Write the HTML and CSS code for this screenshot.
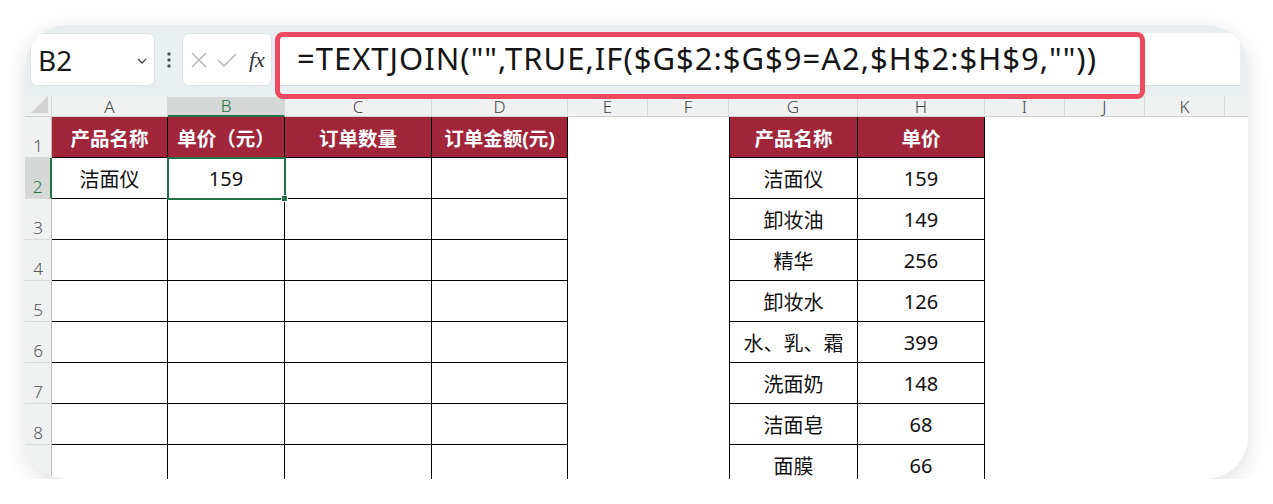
FILE: index.html
```html
<!DOCTYPE html>
<html lang="zh-CN">

<head>
    <meta charset="UTF-8">
    <meta name="viewport" content="width=device-width, initial-scale=1.0">
    <title>TEXTJOIN</title>
    <link rel="stylesheet" href="styles.css">
</head>

<body>
    <div class="card">
        <!-- 名称框 + 编辑栏 -->
        <div class="toolbar">
            <div class="nameBox">
                <span class="ref">B2</span>
                <svg class="chev" width="12" height="8" viewBox="0 0 12 8">
                    <path d="M2 2l4 4 4-4" fill="none" stroke="#444" stroke-width="1.3" />
                </svg>
            </div>
            <div class="grip">
                <svg width="6" height="18" viewBox="0 0 6 18">
                    <circle cx="3" cy="3" r="1.7" fill="#555" />
                    <circle cx="3" cy="9" r="1.7" fill="#555" />
                    <circle cx="3" cy="15" r="1.7" fill="#555" />
                </svg>
            </div>
            <div class="fnBox">
                <svg width="18" height="18" viewBox="0 0 18 18">
                    <path d="M2 2l14 14M16 2L2 16" stroke="#b9b9b9" stroke-width="1.6" />
                </svg>
                <svg width="22" height="18" viewBox="0 0 22 18">
                    <path d="M2 9l6 6L20 3" fill="none" stroke="#b9b9b9" stroke-width="1.6" />
                </svg>
                <span class="fx">fx</span>
            </div>
            <div class="formula">=TEXTJOIN("",TRUE,IF($G$2:$G$9=A2,$H$2:$H$9,""))</div>
            <div class="mark"></div>
        </div>

        <table class="sheet">
            <colgroup>
                <col style="width:27px">
                <col style="width:116px">
                <col style="width:117px">
                <col style="width:147px">
                <col style="width:136px">
                <col style="width:80px">
                <col style="width:81px">
                <col style="width:129px">
                <col style="width:127px">
                <col style="width:80px">
                <col style="width:80px">
                <col style="width:80px">
                <col style="width:23px">
            </colgroup>
            <tr class="colHead">
                <th class="corner"><span class="tri"></span></th>
                <th>A</th>
                <th class="on">B</th>
                <th>C</th>
                <th>D</th>
                <th>E</th>
                <th>F</th>
                <th>G</th>
                <th>H</th>
                <th>I</th>
                <th>J</th>
                <th>K</th>
                <th class="last"></th>
            </tr>
            <tr>
                <th class="rn">1</th>
                <td class="b hd">产品名称</td>
                <td class="b hd">单价（元）</td>
                <td class="b hd">订单数量</td>
                <td class="b hd">订单金额(元)</td>
                <td></td>
                <td></td>
                <td class="b bl hd">产品名称</td>
                <td class="b hd">单价</td>
                <td></td><td></td><td></td><td></td>
            </tr>
            <tr>
                <th class="rn on">2</th>
                <td class="b">洁面仪</td>
                <td class="b sel">159</td>
                <td class="b"></td>
                <td class="b"></td>
                <td></td>
                <td></td>
                <td class="b bl">洁面仪</td>
                <td class="b">159</td>
                <td></td><td></td><td></td><td></td>
            </tr>
            <tr>
                <th class="rn">3</th>
                <td class="b"></td><td class="b"></td><td class="b"></td><td class="b"></td>
                <td></td><td></td>
                <td class="b bl">卸妆油</td>
                <td class="b">149</td>
                <td></td><td></td><td></td><td></td>
            </tr>
            <tr>
                <th class="rn">4</th>
                <td class="b"></td><td class="b"></td><td class="b"></td><td class="b"></td>
                <td></td><td></td>
                <td class="b bl">精华</td>
                <td class="b">256</td>
                <td></td><td></td><td></td><td></td>
            </tr>
            <tr>
                <th class="rn">5</th>
                <td class="b"></td><td class="b"></td><td class="b"></td><td class="b"></td>
                <td></td><td></td>
                <td class="b bl">卸妆水</td>
                <td class="b">126</td>
                <td></td><td></td><td></td><td></td>
            </tr>
            <tr>
                <th class="rn">6</th>
                <td class="b"></td><td class="b"></td><td class="b"></td><td class="b"></td>
                <td></td><td></td>
                <td class="b bl">水、乳、霜</td>
                <td class="b">399</td>
                <td></td><td></td><td></td><td></td>
            </tr>
            <tr>
                <th class="rn">7</th>
                <td class="b"></td><td class="b"></td><td class="b"></td><td class="b"></td>
                <td></td><td></td>
                <td class="b bl">洗面奶</td>
                <td class="b">148</td>
                <td></td><td></td><td></td><td></td>
            </tr>
            <tr>
                <th class="rn">8</th>
                <td class="b"></td><td class="b"></td><td class="b"></td><td class="b"></td>
                <td></td><td></td>
                <td class="b bl">洁面皂</td>
                <td class="b">68</td>
                <td></td><td></td><td></td><td></td>
            </tr>
            <tr class="cut">
                <th class="rn"></th>
                <td class="b"></td><td class="b"></td><td class="b"></td><td class="b"></td>
                <td></td><td></td>
                <td class="b bl">面膜</td>
                <td class="b">66</td>
                <td></td><td></td><td></td><td></td>
            </tr>
        </table>
    </div>
</body>

</html>
```

FILE: styles.css
```css
body {
    margin: 0;
    background: #fff;
    font-family: "Noto Sans", "Noto Sans CJK SC", sans-serif;
}

.card {
    position: relative;
    margin: 25px 0 0 25px;
    width: 1223px;
    height: 454px;
    border-radius: 42px;
    overflow: hidden;
    background: #fff;
    box-shadow: 0 6px 22px rgba(0, 0, 0, 0.13);
}

/* 编辑栏 */
.toolbar {
    position: relative;
    display: flex;
    align-items: flex-start;
    box-sizing: border-box;
    height: 72px;
    padding: 8px 0 0 5px;
    background: #e9eff1;
}

.nameBox,
.fnBox,
.formula {
    box-sizing: border-box;
    height: 53px;
    background: #fff;
    border: 1px solid #dde3e6;
    border-radius: 7px;
}

.nameBox {
    width: 125px;
    display: flex;
    align-items: center;
    padding-left: 7px;
}

.ref {
    font-size: 28px;
    color: #1b1b1b;
    line-height: 1;
}

.chev {
    margin-left: auto;
    margin-right: 6px;
    margin-top: 2px;
}

.grip {
    width: 27px;
    height: 53px;
    display: flex;
    align-items: center;
    justify-content: center;
}

.fnBox {
    width: 90px;
    display: flex;
    align-items: center;
    padding-left: 7px;
    gap: 8px;
}

.fx {
    font-family: "Liberation Serif", serif;
    font-style: italic;
    font-size: 22px;
    color: #333;
    margin-left: 3px;
}

.formula {
    flex: 1;
    margin-left: 8px;
    margin-right: 8px;
    padding-left: 17px;
    border-radius: 0;
    border-width: 0 0 1px 0;
    border-color: #d6dcdf;
    font-size: 31px;
    letter-spacing: 1px;
    line-height: 51px;
    color: #151515;
    white-space: nowrap;
}

.mark {
    position: absolute;
    left: 250px;
    top: 7px;
    width: 870px;
    height: 67px;
    box-sizing: border-box;
    border: 5px solid #ee4a5f;
    border-radius: 8px;
}

/* 表格 */
.sheet {
    table-layout: fixed;
    width: 1223px;
    border-collapse: separate;
    border-spacing: 0;
}

.sheet td,
.sheet th {
    box-sizing: border-box;
    padding: 0;
}

.sheet tr {
    height: 41px;
}

.sheet tr.colHead {
    height: 20px;
}

.colHead th {
    background: #f0f1f1;
    border-right: 1px solid #d9d9d9;
    border-bottom: 1px solid #d0d0d0;
    font-weight: 300;
    font-size: 17px;
    line-height: 18px;
    color: #444;
    text-align: center;
}

.colHead th.on {
    background: #d6d7d7;
    color: #217346;
    border-bottom: 2px solid #217346;
}

.colHead th.last {
    border-right: 0;
}

.corner {
    position: relative;
}

.tri {
    position: absolute;
    right: 3px;
    bottom: 3px;
    width: 0;
    height: 0;
    border-left: 17px solid transparent;
    border-bottom: 17px solid #d2d2d2;
}

.rn {
    background: #f0f1f1;
    border-right: 1px solid #bcbcbc;
    border-bottom: 1px solid #dadada;
    vertical-align: bottom;
    font-weight: 300;
    font-size: 17px;
    line-height: 20px;
    color: #555;
    padding-bottom: 1px !important;
}

.rn.on {
    background: #d6d7d7;
    color: #217346;
    border-right: 2px solid #217346;
}

.sheet td {
    text-align: center;
    font-size: 20px;
    color: #111;
}

.b {
    border-right: 1px solid #000;
    border-bottom: 1px solid #000;
}

.bl {
    border-left: 1px solid #000;
}

.hd {
    background: #a1263a;
    color: #fff !important;
    font-weight: 700;
    font-size: 19.5px !important;
}

.sel {
    position: relative;
    outline: 2px solid #217346;
    outline-offset: -1px;
}

.sel::after {
    content: "";
    position: absolute;
    right: -4px;
    bottom: -4px;
    width: 5px;
    height: 5px;
    background: #217346;
    border: 1px solid #fff;
}
```
